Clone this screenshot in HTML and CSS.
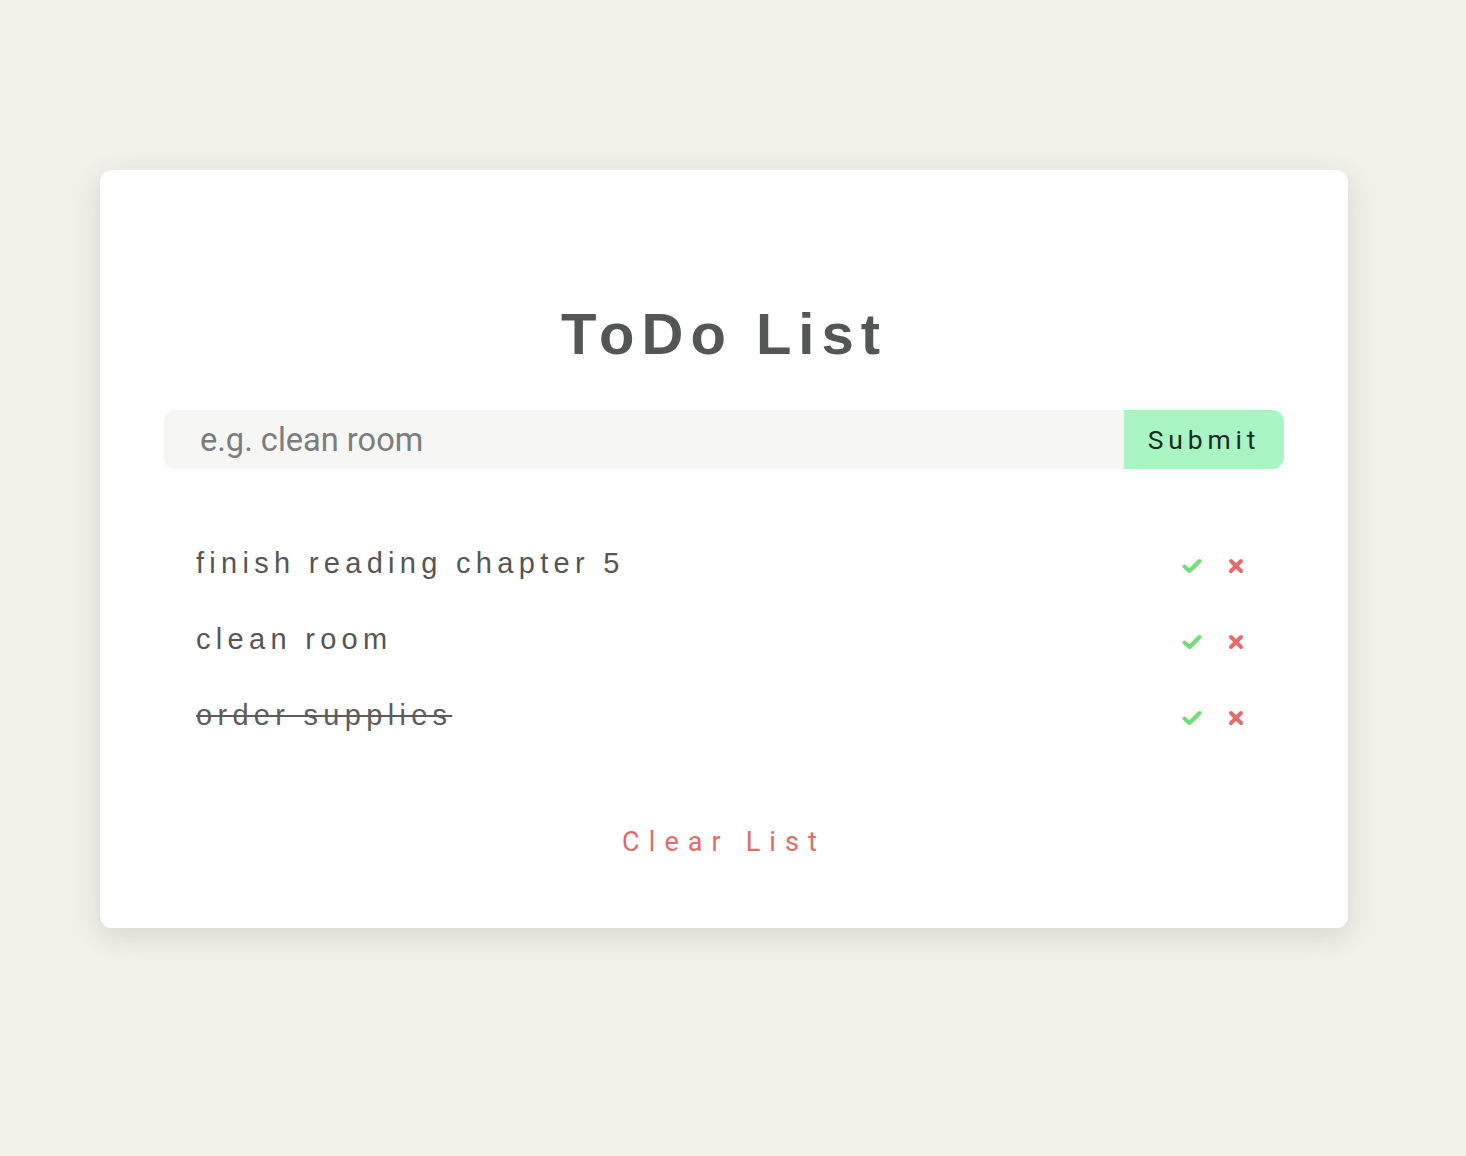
FILE: index.html
```html
<!DOCTYPE html>
<html lang="en">
<head>
<meta charset="utf-8">
<title>ToDo List</title>
<link rel="stylesheet" href="styles.css">
</head>
<body>
<main class="page">
  <section class="card">
    <h1 class="title">ToDo List</h1>
    <form class="entry">
      <input class="entry-input" type="text" placeholder="e.g. clean room">
      <button class="entry-submit" type="button">Submit</button>
    </form>
    <ul class="items">
      <li class="item">
        <span class="item-text">finish reading chapter 5</span>
        <span class="item-actions">
          <svg class="icon-check" viewBox="0 0 20 16" width="20" height="16"><path d="M2.5 8.5 L7.5 13 L17.5 3" fill="none" stroke="currentColor" stroke-width="4" stroke-linecap="round" stroke-linejoin="round"/></svg>
          <svg class="icon-cross" viewBox="0 0 16 16" width="16" height="16"><path d="M3 3 L13 13 M13 3 L3 13" fill="none" stroke="currentColor" stroke-width="4" stroke-linecap="round"/></svg>
        </span>
      </li>
      <li class="item">
        <span class="item-text">clean room</span>
        <span class="item-actions">
          <svg class="icon-check" viewBox="0 0 20 16" width="20" height="16"><path d="M2.5 8.5 L7.5 13 L17.5 3" fill="none" stroke="currentColor" stroke-width="4" stroke-linecap="round" stroke-linejoin="round"/></svg>
          <svg class="icon-cross" viewBox="0 0 16 16" width="16" height="16"><path d="M3 3 L13 13 M13 3 L3 13" fill="none" stroke="currentColor" stroke-width="4" stroke-linecap="round"/></svg>
        </span>
      </li>
      <li class="item">
        <span class="item-text done">order supplies</span>
        <span class="item-actions">
          <svg class="icon-check" viewBox="0 0 20 16" width="20" height="16"><path d="M2.5 8.5 L7.5 13 L17.5 3" fill="none" stroke="currentColor" stroke-width="4" stroke-linecap="round" stroke-linejoin="round"/></svg>
          <svg class="icon-cross" viewBox="0 0 16 16" width="16" height="16"><path d="M3 3 L13 13 M13 3 L3 13" fill="none" stroke="currentColor" stroke-width="4" stroke-linecap="round"/></svg>
        </span>
      </li>
    </ul>
    <button class="clear" type="button">Clear List</button>
  </section>
</main>
</body>
</html>
```
FILE: styles.css
```css
* { box-sizing: border-box; }
html, body { margin: 0; padding: 0; }
body {
  background: #f1f1ea;
  font-family: "Liberation Sans", Arial, sans-serif;
  min-height: 1156px;
}
.page {
  padding: 170px 118px 0 100px;
}
.card {
  background: #ffffff;
  border-radius: 12px;
  box-shadow: 0 8px 28px rgba(60, 60, 40, 0.14);
  padding: 129px 64px 66px;
  display: flex;
  flex-direction: column;
  height: 758px;
}
.title {
  margin: 0;
  text-align: center;
  font-size: 58px;
  line-height: 70px;
  font-weight: 700;
  letter-spacing: 7px;
  color: #535655;
  padding-left: 0;
}
.entry {
  margin: 41px 0 0;
  display: flex;
  height: 59px;
}
.entry-input {
  flex: 1;
  border: none;
  outline: none;
  background: #f6f6f4;
  border-radius: 10px 0 0 10px;
  padding: 0 0 0 36px;
  font-family: Roboto, "Liberation Sans", sans-serif;
  font-size: 32.6px;
  color: #444;
}
.entry-input::placeholder { color: #7c7e7d; }
.entry-submit {
  width: 160px;
  border: none;
  background: #a8f5c3;
  border-radius: 0 12px 12px 0;
  font-family: Roboto, "Liberation Sans", sans-serif;
  font-size: 26.5px;
  letter-spacing: 4.8px;
  color: #1f2a22;
  padding: 0;
}
.items {
  list-style: none;
  margin: 56px 0 0;
  padding: 0 40px 0 32px;
}
.item {
  height: 76px;
  display: flex;
  align-items: center;
  justify-content: space-between;
}
.item-text {
  font-size: 29px;
  letter-spacing: 5.3px;
  color: #555654;
}
.item-text.done {
  text-decoration: line-through;
  text-decoration-thickness: 2px;
  color: #5c5d5b;
}
.item-actions {
  display: flex;
  align-items: center;
  gap: 26px;
  padding-top: 6px;
}
.icon-check { color: #6ddf74; display: block; }
.icon-cross { color: #e86a6a; display: block; }
.clear {
  align-self: center;
  margin-top: 69px;
  border: none;
  background: none;
  font-family: Roboto, "Liberation Sans", sans-serif;
  font-size: 27px;
  line-height: 40px;
  letter-spacing: 9.1px;
  color: #e26a6a;
  padding: 0;
}
```
